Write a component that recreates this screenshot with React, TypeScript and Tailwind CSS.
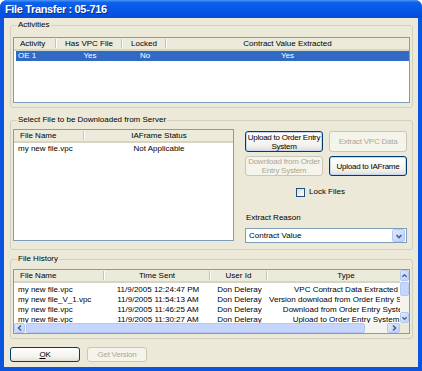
import React from 'react';

type Col = { label: string; w: string; left?: boolean };

function Sep() {
  return <span className="h-[9px] w-[2px] shrink-0 border-x border-l-[#c7c5b2] border-r-white" />;
}

function ListHeader({ cols }: { cols: Col[] }) {
  return (
    <div className="flex h-[13px] shrink-0 bg-[#ebeadb] border-b-2 border-[#d8d4c2]">
      {cols.map((c, i) => (
        <div key={c.label} className={`flex shrink-0 items-center ${c.w}`}>
          <span className={`flex-1 whitespace-nowrap overflow-hidden ${c.left ? 'pl-[6px] text-left' : 'text-center'}`}>
            {c.label}
          </span>
          {i < cols.length - 1 && <Sep />}
        </div>
      ))}
    </div>
  );
}

function Row({ cells, cols, selected }: { cells: string[]; cols: Col[]; selected?: boolean }) {
  return (
    <div className={`flex h-[10px] shrink-0 items-center ${selected ? 'bg-[#316ac5] text-white' : ''}`}>
      {cells.map((t, i) => (
        <div
          key={i}
          className={`shrink-0 whitespace-nowrap overflow-hidden ${cols[i].w} ${cols[i].left ? 'pl-[4px] text-left' : 'text-center'}`}
        >
          {t}
        </div>
      ))}
    </div>
  );
}

function Chevron({ dir }: { dir: 'up' | 'down' | 'left' | 'right' }) {
  const pts = {
    up: '1.5,5 4,2.5 6.5,5',
    down: '1.5,3 4,5.5 6.5,3',
    left: '5,1.5 2.5,4 5,6.5',
    right: '3,1.5 5.5,4 3,6.5',
  }[dir];
  return (
    <svg width="8" height="8" viewBox="0 0 8 8">
      <polyline points={pts} fill="none" stroke="#4d6185" strokeWidth="1.6" />
    </svg>
  );
}

function ScrollBtn({ dir, className = '' }: { dir: 'up' | 'down' | 'left' | 'right'; className?: string }) {
  return (
    <div
      className={`flex shrink-0 items-center justify-center rounded-[2px] border border-[#b4c8f6] bg-[linear-gradient(135deg,#e0eafe,#bcd0fa)] ${className}`}
    >
      <Chevron dir={dir} />
    </div>
  );
}

function Button({
  children,
  disabled,
  className = '',
  def,
}: {
  children: React.ReactNode;
  disabled?: boolean;
  className?: string;
  def?: boolean;
}) {
  return (
    <div
      className={`flex shrink-0 items-center justify-center whitespace-nowrap rounded-[3px] border text-center leading-[9px] tracking-[-0.25px] ${
        disabled
          ? 'border-[#c9c7ba] bg-[#f5f4ea] text-[#aca899]'
          : `border-[#003c74] bg-[linear-gradient(to_bottom,#ffffff,#f3f2ec_70%,#e1ded3)] text-black ${
              def ? 'shadow-[inset_0_0_0_1px_#c4d6f4]' : ''
            }`
      } ${className}`}
    >
      {children}
    </div>
  );
}

function Group({ label, className = '', children }: { label: string; className?: string; children: React.ReactNode }) {
  return (
    <fieldset className={`min-w-0 rounded-[3px] border border-[#d0d0bf] px-[2px] ${className}`}>
      <legend className="ml-[4px] px-[1px] leading-[10px]">{label}</legend>
      {children}
    </fieldset>
  );
}

const actCols: Col[] = [
  { label: 'Activity', w: 'w-[43px]', left: true },
  { label: 'Has VPC File', w: 'w-[66px]' },
  { label: 'Locked', w: 'w-[44px]' },
  { label: 'Contract Value Extracted', w: 'w-[241px]' },
];
const actRowCols: Col[] = [
  { label: '', w: 'w-[41px] !pl-[2px]', left: true },
  { label: '', w: 'w-[66px]' },
  { label: '', w: 'w-[44px]' },
  { label: '', w: 'w-[241px]' },
];

const fileCols: Col[] = [
  { label: 'File Name', w: 'w-[71px]', left: true },
  { label: 'IAFrame Status', w: 'w-[148px]' },
];

const histCols: Col[] = [
  { label: 'File Name', w: 'w-[91px]', left: true },
  { label: 'Time Sent', w: 'w-[106px]' },
  { label: 'User Id', w: 'w-[57px]' },
  { label: 'Type', w: 'w-[156px]' },
];

const history = [
  ['my new file.vpc', '11/9/2005 12:24:47 PM', 'Don Deleray', 'VPC Contract Data Extracted'],
  ['my new file_V_1.vpc', '11/9/2005 11:54:13 AM', 'Don Deleray', 'Version download from Order Entry System'],
  ['my new file.vpc', '11/9/2005 11:46:25 AM', 'Don Deleray', 'Download from Order Entry System'],
  ['my new file.vpc', '11/9/2005 11:30:27 AM', 'Don Deleray', 'Upload to Order Entry System'],
];

export default function App() {
  return (
    <div className="flex h-[371px] w-[422px] flex-col overflow-hidden rounded-t-[7px] bg-[#0b54de] font-['Liberation_Sans',Arial,sans-serif] text-[8px] leading-[10px] text-black">
      {/* Title bar */}
      <div className="flex h-[18px] shrink-0 items-center bg-[linear-gradient(to_bottom,#4a97f8_0%,#0e62ea_14%,#0556e6_55%,#0450df_85%,#0947cc_100%)] pl-[5px]">
        <span className="text-[11px] font-bold tracking-[-0.35px] text-white [text-shadow:1px_1px_0_#0a2f8a]">
          File Transfer : 05-716
        </span>
      </div>

      {/* Body */}
      <div className="mx-[4px] mb-[4px] flex min-w-0 flex-1 flex-col bg-[#ece9d8] pl-[6px] pr-[5px]">
        <Group label="Activities" className="mt-[2px] pt-[7px] pb-[4px]">
          <div className="flex h-[66px] flex-col border border-[#7f9db9] bg-white">
            <ListHeader cols={actCols} />
            <div className="ml-[2px]">
              <Row cols={actRowCols} cells={['OE 1', 'Yes', 'No', 'Yes']} selected />
            </div>
          </div>
        </Group>

        <Group label="Select File to be Downloaded from Server" className="mt-[7px] pt-[4px] pb-[6px]">
          <div className="flex">
            <div className="flex h-[112px] w-[221px] shrink-0 flex-col border border-[#7f9db9] bg-white">
              <ListHeader cols={fileCols} />
              <div className="mt-[1px]">
                <Row cols={fileCols} cells={['my new file.vpc', 'Not Applicable']} />
              </div>
            </div>

            <div className="ml-[11px] flex flex-1 flex-col pt-[2px] pr-[3px]">
              <div className="flex gap-[6px]">
                <Button def className="h-[21px] w-[78px] flex-col">
                  <span>Upload to Order Entry</span>
                  <span>System</span>
                </Button>
                <Button disabled className="h-[21px] w-[78px]">
                  Extract VPC Data
                </Button>
              </div>
              <div className="mt-[4px] flex gap-[6px]">
                <Button disabled className="h-[20px] w-[78px] flex-col">
                  <span>Download from Order</span>
                  <span>Entry System</span>
                </Button>
                <Button def className="h-[20px] w-[78px] border-[#1e3f6e]">
                  Upload to IAFrame
                </Button>
              </div>

              <div className="mt-[11px] flex items-center pl-[51px]">
                <span className="h-[9px] w-[9px] shrink-0 border border-[#1c5180] bg-[linear-gradient(135deg,#dcdcd7,#ffffff)]" />
                <span className="ml-[4px]">Lock Files</span>
              </div>

              <div className="mt-[16px] pl-[1px]">Extract Reason</div>
              <div className="mt-[5px] flex h-[15px] w-[162px] items-center border border-[#7f9db9] bg-white pl-[3px]">
                <span className="flex-1">Contract Value</span>
                <ScrollBtn dir="down" className="mr-[1px] h-[13px] w-[13px]" />
              </div>
            </div>
          </div>
        </Group>

        <Group label="File History" className="mt-[4px] pt-[5px] pb-[4px]">
          <div className="flex h-[65px] w-full flex-col overflow-hidden border border-[#7f9db9] bg-white">
            <div className="flex h-[53px] shrink-0">
              <div className="flex min-w-0 flex-1 flex-col overflow-hidden">
                <ListHeader cols={histCols} />
                <div className="mt-[2px]">
                  {history.map((r, i) => (
                    <Row key={i} cols={histCols} cells={r} />
                  ))}
                </div>
              </div>
              <div className="flex w-[9px] shrink-0 flex-col bg-[#f4f3ee]">
                <ScrollBtn dir="up" className="h-[11px] w-[9px]" />
                <div className="mt-[1px] h-[14px] w-[9px] rounded-[2px] border border-[#b4c8f6] bg-[#c6d5fb]" />
                <div className="flex-1" />
                <ScrollBtn dir="down" className="h-[11px] w-[9px]" />
              </div>
            </div>
            <div className="flex h-[10px] shrink-0 bg-[#f4f3ee]">
              <ScrollBtn dir="left" className="h-[10px] w-[11px]" />
              <div className="ml-[1px] h-[10px] w-[339px] shrink-0 rounded-[2px] border border-[#b4c8f6] bg-[#c6d5fb]" />
              <div className="flex-1" />
              <ScrollBtn dir="right" className="h-[10px] w-[13px]" />
              <div className="w-[9px] shrink-0 bg-[#ece9d8]" />
            </div>
          </div>
        </Group>

        <div className="mt-[8px] flex gap-[7px]">
          <Button className="h-[15px] w-[70px]">
            <span>
              <span className="underline">O</span>K
            </span>
          </Button>
          <Button disabled className="h-[15px] w-[60px]">
            Get Version
          </Button>
        </div>
      </div>
    </div>
  );
}
